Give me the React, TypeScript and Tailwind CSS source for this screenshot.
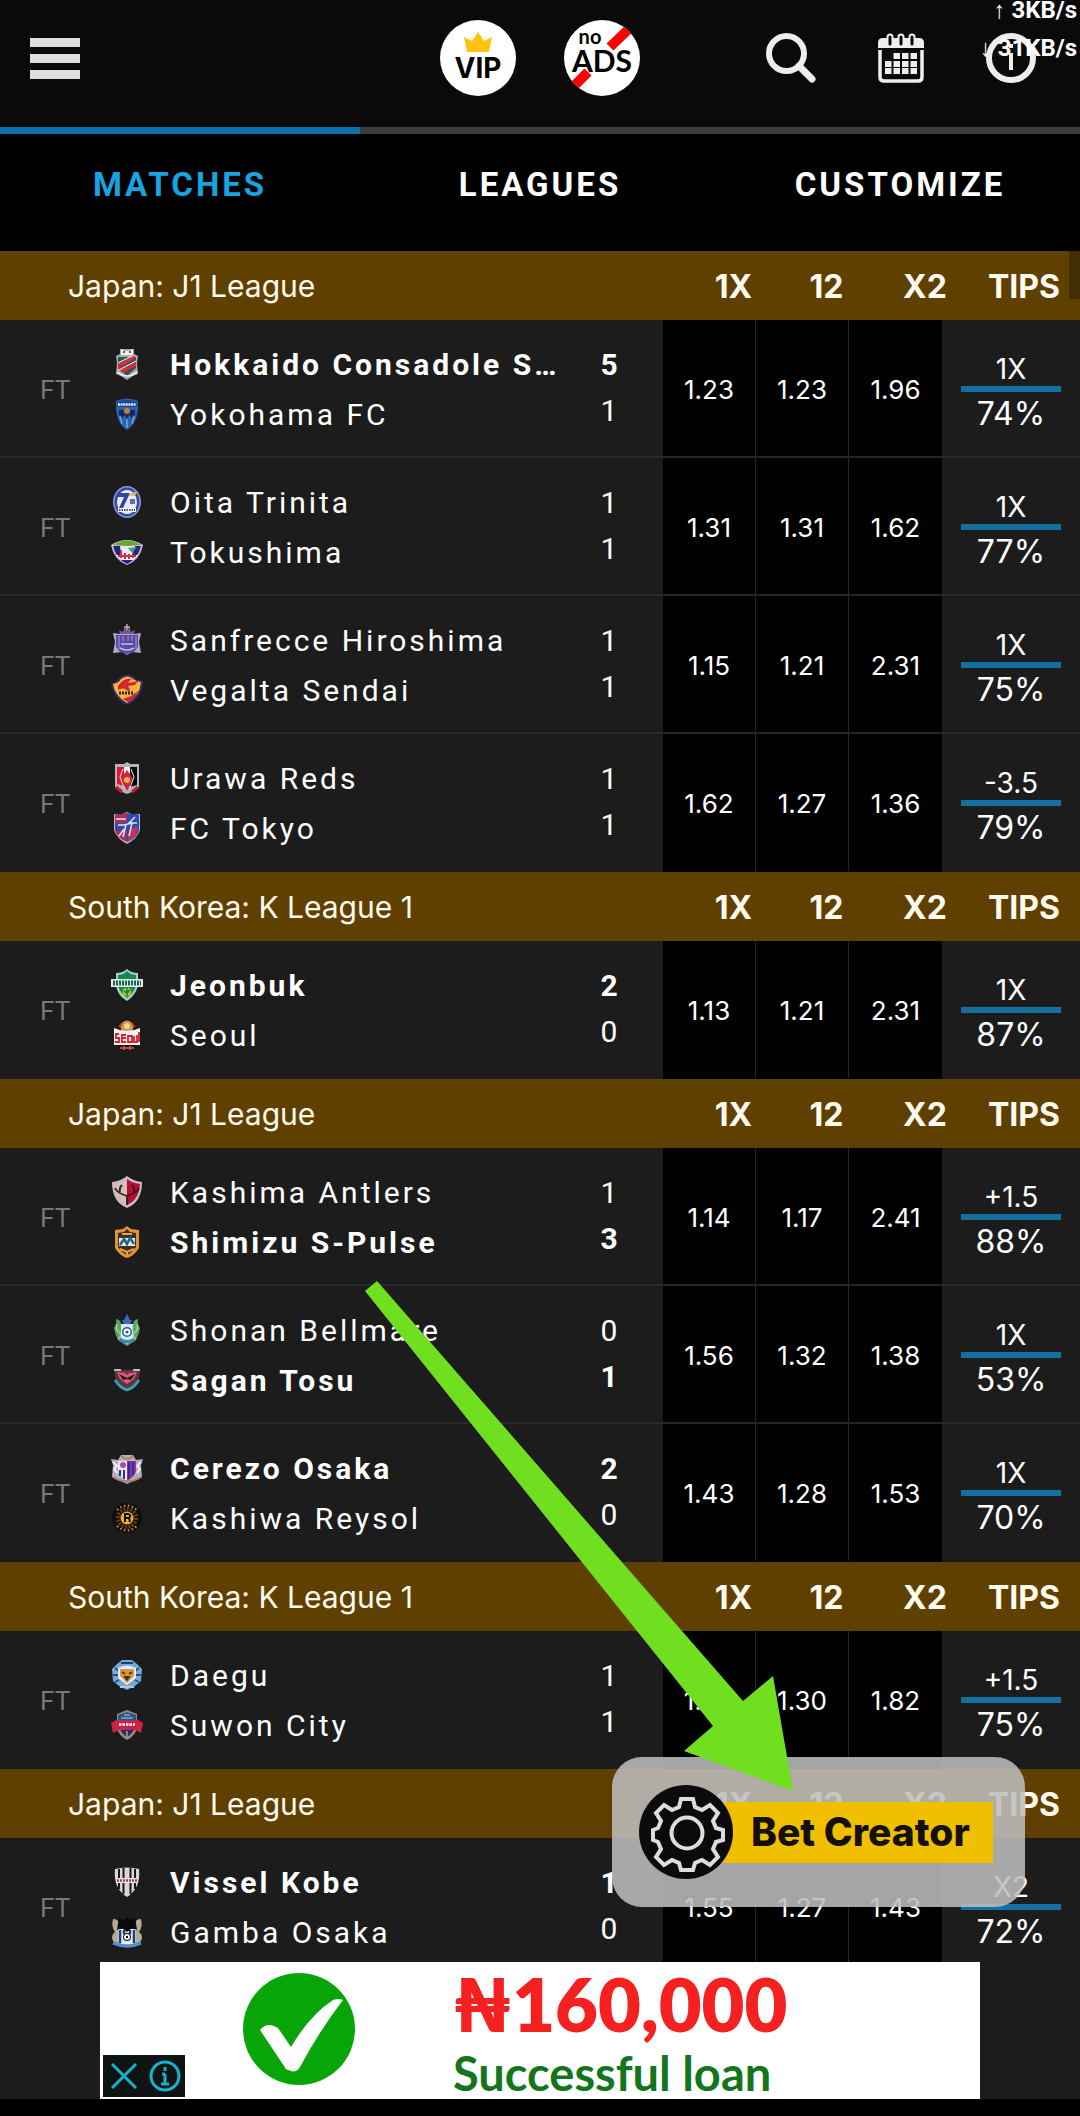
import type { ReactNode } from "react";

type Team = { name: string; crest: ReactNode; score: number; winner?: boolean };
type Match = { home: Team; away: Team; odds: [string, string, string]; tip: string; chance: string };
type League = { title: string; matches: Match[] };

const SHIELD = "M4 3 Q16 0 28 3 Q30 22 16 31 Q2 22 4 3Z";

function Crest({ children }: { children: ReactNode }) {
  return (
    <svg viewBox="0 0 32 32" className="size-8 shrink-0" aria-hidden="true">
      {children}
    </svg>
  );
}

const crests = {
  consadole: (
    <Crest>
      <path d="M9 1h14v5l4 2-1 7 1 11-5 2-6 4-6-4-5-2 1-11-1-7 4-2z" fill="#a9aaa9" />
      <path d="M10 1l4 2h4l4-2v6H10z" fill="#f1f1ef" />
      <path d="M12 4h2M18 4h2" stroke="#333" strokeWidth="1.5" />
      <path d="M7 9h18v11l-9 8-9-8z" fill="#28575f" />
      <path d="M7 16L22 8l3 2-18 11zM8 22l17-8v4L12 25z" fill="#d52b3a" />
      <path d="M7 15l14-7M8 22l17-9" stroke="#fff" strokeWidth="1" />
      <path d="M6 24l7 4M26 24l-7 4M10 27l6 1 6-1" stroke="#eee" strokeWidth="1.5" fill="none" />
    </Crest>
  ),
  yokohama: (
    <Crest>
      <path d="M5 3Q16-2 27 3Q28 25 16 32Q4 25 5 3Z" fill="#2c62ae" />
      <path d="M6 4Q16 0 26 4V9H6z" fill="#15479b" />
      <path d="M7 6.500h18" stroke="#dfe9f7" strokeWidth="2.500" strokeDasharray="2 .6" />
      <path d="M8 12h16v5l-3 3-3-3-2 4-2-4-3 3-3-3z" fill="#132b60" />
      <circle cx="16" cy="13" r="3" fill="#d1773b" />
      <path d="M9 18l2 8M23 18l-2 8M16 21v9" stroke="#6ea6e0" strokeWidth="1.500" />
    </Crest>
  ),
  oita: (
    <Crest>
      <ellipse cx="16" cy="16" rx="14" ry="16" fill="#8c9bd2" />
      <ellipse cx="16" cy="16" rx="12.500" ry="14.500" fill="#3949a4" />
      <ellipse cx="16" cy="16" rx="10" ry="12" fill="#e9edfa" />
      <path d="M7 7h12l-7 15H8l5-11H6z" fill="#3145a7" />
      <path d="M18 10q4-5 8-4l-2 4q-3-1-6 0z" fill="#d9b556" />
      <path d="M19 13h5v5h-5z" fill="#5a6cbd" />
      <path d="M7 24h18" stroke="#fff" strokeWidth="4" />
      <path d="M8 24h16" stroke="#3949a4" strokeWidth="2" strokeDasharray="1.500 1" />
    </Crest>
  ),
  tokushima: (
    <Crest>
      <path d="M0 9Q16-1 32 9Q29 24 16 29Q3 24 0 9Z" fill="#ccc8dc" />
      <path d="M2 9Q16 0 30 9l-14 1z" fill="#6aa52f" />
      <path d="M2 10h28Q27 23 16 28Q5 23 2 10Z" fill="#2b2383" />
      <path d="M9 10h15l-3 9H10z" fill="#e9edf0" />
      <path d="M17 12l9-1-5 6z" fill="#41a667" />
      <path d="M5 19h22l-5 5H10z" fill="#fff" />
      <path d="M10 14v8M7 20h18M14 17v6M18 18v5M22 19v3" stroke="#de2645" strokeWidth="2" />
    </Crest>
  ),
  hiroshima: (
    <Crest>
      <path d="M2 9l7 1 7-3 7 3 7-1-2 9 2 11-9-1-5 3-5-3-9 1 2-11z" fill="#b7a7ca" />
      <path d="M5 11h22v12l-4 5-7 2-7-2-4-5z" fill="#5a4aa1" />
      <path d="M8 12v13M12 12v5M17 12v5M21 12v5M25 12v13" stroke="#a59bd1" strokeWidth="1" />
      <path d="M10 20h12M9 24q7 4 14 0" stroke="#c6bee0" strokeWidth="1.500" fill="none" />
      <path d="M8 6l4 2 2-6 2 5 2-5 2 6 4-2-1 4H9z" fill="#735c91" />
      <path d="M16 0v6M13 3h6" stroke="#c7a9a2" strokeWidth="1.500" />
    </Crest>
  ),
  vegalta: (
    <Crest>
      <path d="M0 9q5 0 8-5 10-7 16 0 3 3 8 2Q32 24 16 31 2 25 0 9z" fill="#35296c" />
      <path d="M2 10q6-1 8-5 7-5 12 0 4 3 8 3Q29 22 16 29 4 22 2 10z" fill="#f3b63a" />
      <path d="M7 12q6-9 14-7-3 2-4 4l10-2-3 4-7 1q3 4 1 6-5-6-11-2z" fill="#d22533" />
      <path d="M12 25l8-3 7-5-4 8-6 3z" fill="#d22533" />
      <path d="M8 19h14" stroke="#2d2543" strokeWidth="3" strokeDasharray="2 1" />
    </Crest>
  ),
  urawa: (
    <Crest>
      <path d="M4 2h9l3-2 3 2h9v23l-7 5-5 2-5-2-7-5z" fill="#b6b4b5" />
      <path d="M6 5h7v19l-7-2z" fill="#df1538" />
      <path d="M19 5h7v18l-7 2z" fill="#080808" />
      <path d="M13 5h6v6h-6z" fill="#f3f3f3" />
      <path d="M16 8l6 9-6 12-6-12z" fill="#d92041" />
      <circle cx="16" cy="18" r="3" fill="#efb34b" />
      <path d="M5 25l6 5M27 25l-6 5" stroke="#c11b3b" strokeWidth="3" />
      <path d="M12 7l-3 8 4 11M20 7l3 8-4 11" stroke="#ece9ea" strokeWidth="1" fill="none" />
    </Crest>
  ),
  tokyo: (
    <Crest>
      <path d="M3 2l7 1 6-3 6 3 7-1v16q-3 9-13 14Q6 27 3 18z" fill="#bcb5cc" />
      <path d="M4 3l12-2v29Q6 26 4 18z" fill="#a93159" />
      <path d="M16 1l12 2v15q-2 8-12 12z" fill="#2a4bac" />
      <path d="M4 11h12v8H5z" fill="#344aa5" />
      <path d="M18 18l9-4-2 10-8 5z" fill="#c93255" />
      <path d="M5 7h10M7 13h8l-3 12M13 13l8-2-3 13M24 5l-6 6h8M8 24l5-7" stroke="#e4e2ed" strokeWidth="1.500" fill="none" />
    </Crest>
  ),
  jeonbuk: (
    <Crest>
      <path d="M5 4q7 0 11-4 4 4 11 4v13q-3 10-11 15Q7 27 5 17z" fill="#a8cfb8" />
      <path d="M7 6q6 0 9-4 3 4 9 4v11q-3 8-9 12-6-4-9-12z" fill="#128754" />
      <path d="M0 10h32v8H0z" fill="#e3eee7" />
      <path d="M2 14h28" stroke="#15694a" strokeWidth="5" strokeDasharray="2 1" />
      <circle cx="16" cy="23" r="4.500" fill="#9cc43b" />
      <path d="M16 18v9M13 22l3 2 3-3" stroke="#2c743a" strokeWidth="1.500" fill="none" />
    </Crest>
  ),
  seoul: (
    <Crest>
      <circle cx="16" cy="9" r="9" fill="#141414" />
      <circle cx="16" cy="8" r="6.500" fill="#c49951" />
      <circle cx="16" cy="7" r="3" fill="#efd58e" />
      <path d="M8 8l3-4M24 8l-3-4" stroke="#c33127" strokeWidth="2" />
      <path d="M5 24h22l-4 7H9z" fill="#181111" />
      <path d="M9 29h14M13 31v-4M19 31v-4" stroke="#c64538" strokeWidth="2" />
      <path d="M3 9q13 6 26 0v17H3z" fill="#f4f2f1" />
      <path d="M8 15H5v4h3v4H4M15 16h-4v7h4M11 19h4M17 17h4v6h-4zM23 17v6h3v-7M28 13v10" stroke="#d12130" strokeWidth="1.800" fill="none" />
    </Crest>
  ),
  kashima: (
    <Crest>
      <path d="M1 6Q10 5 16 0 22 5 31 6 31 26 16 32 1 26 1 6z" fill="#c9bdc0" />
      <path d="M3 8q8-1 13-5v26Q4 24 3 8z" fill="#d6bdb9" />
      <path d="M16 3q5 4 13 5-1 16-13 21z" fill="#b80f31" />
      <path d="M16 29V20Q6 17 4 12M16 20Q26 17 28 12M9 16Q8 12 11 9M23 16Q24 12 21 9" stroke="#2a1b21" strokeWidth="1.800" fill="none" />
    </Crest>
  ),
  shimizu: (
    <Crest>
      <path d="M4 4l8-1 4-3 4 3 8 1v18q-5 8-12 10Q9 30 4 22z" fill="#e69234" />
      <path d="M7 7l6-1 3-3 3 3 6 1v14q-4 6-9 8-5-2-9-8z" fill="#3b3024" />
      <path d="M8 12h16v8H8z" fill="#e9e6dc" />
      <path d="M9 19l4-6 3 5 3-6 4 6" stroke="#21618d" strokeWidth="2.500" fill="none" />
      <path d="M11 8h10M9 23l7 3 7-3M16 25v4" stroke="#efa13e" strokeWidth="2" fill="none" />
    </Crest>
  ),
  shonan: (
    <Crest>
      <path d="M5 5q5 1 5 5h12q0-4 5-5-1 6 2 9-1 6-4 12l-9 6-9-6Q4 20 3 14q3-4 2-9z" fill="#5ba666" />
      <path d="M16 0l3 6 2 0-2 5h-6l-2-5h2z" fill="#396eb5" />
      <path d="M10 10h12v14l-6 6-6-6z" fill="#d7e9ef" />
      <circle cx="16" cy="18" r="5" fill="#2e5799" />
      <circle cx="16" cy="18" r="3.500" fill="#fff" />
      <circle cx="16" cy="18" r="1.500" fill="#2e5799" />
      <path d="M6 10q-2 5 2 8t-1 7M26 10q2 5-2 8t1 7" stroke="#a3d39f" strokeWidth="1.500" fill="none" />
      <path d="M9 26q7 3 14 0" stroke="#3c82bd" strokeWidth="3" fill="none" />
    </Crest>
  ),
  sagan: (
    <Crest>
      <path d="M3 6h26l-2 12-11 9L5 18z" fill="#60333f" />
      <path d="M6 8l8 1 2 2 2-2 8-1-3 7-7 5-7-5z" fill="#dc5972" />
      <path d="M8 10l8 4 8-4-4 6-4-1-4 1z" fill="#1c171d" />
      <path d="M3 6h7M22 6h7" stroke="#b3c2cd" strokeWidth="2" />
      <path d="M4 16q5 8 12 10 7-2 12-10" stroke="#38a1bd" strokeWidth="2.500" fill="none" />
    </Crest>
  ),
  cerezo: (
    <Crest>
      <path d="M0 7l7 1 3-5h12l3 5 7-1-2 6 1 12-7 3-8 4-8-4-7-3 1-12z" fill="#b1b1c5" />
      <path d="M7 9h9v20q-9-5-9-11z" fill="#e9e9f6" />
      <path d="M16 9h9v9q0 6-9 11z" fill="#9e2c98" />
      <path d="M9 18v6M13 18v9M18 10v17M22 10v13" stroke="#28359a" strokeWidth="2" />
      <circle cx="12" cy="13" r="3" fill="#b24b96" />
      <path d="M10 4q6 6 12 0M2 25q14 9 28 0" stroke="#a6875a" strokeWidth="2" fill="none" />
      <path d="M2 10l4 4-3 3 3 4M30 10l-4 4 3 3-3 4" stroke="#fff" strokeWidth="1.500" fill="none" />
    </Crest>
  ),
  kashiwa: (
    <Crest>
      <circle cx="16" cy="16" r="15" fill="#100f0e" />
      <circle cx="16" cy="16" r="9" fill="none" stroke="#6b3c14" strokeWidth="4" strokeDasharray="2 1.500" />
      <path d="M6 8Q16-1 26 8M6 24Q16 33 26 24" fill="none" stroke="#c79b3c" strokeWidth="2" strokeDasharray="1.500 2.500" />
      <circle cx="16" cy="16" r="6.500" fill="#eeb02c" />
      <path d="M13 12h4q4 1 1 4h-4M14 12v8M18 16l1 4" stroke="#151008" strokeWidth="2" fill="none" />
    </Crest>
  ),
  daegu: (
    <Crest>
      <path d="M6 5l5-4h10l5 4 5 5-1 12-6 5-8 4-8-4-6-5L1 10z" fill="#76a9d3" />
      <path d="M4 9l4 3M28 9l-4 3M2 16h5M30 16h-5M4 23l4-2M28 23l-4-2" stroke="#214e83" strokeWidth="1.800" />
      <path d="M10 4h12" stroke="#193f6e" strokeWidth="2" />
      <path d="M7 9q9-5 18 0v10l-9 7-9-7z" fill="#e7eaf0" />
      <path d="M9 10h14v7l-7 7-7-7z" fill="#d9983d" />
      <path d="M11 13l3 2M21 13l-3 2M14 18h4l-2 3z" stroke="#483017" strokeWidth="1.800" fill="#483017" />
      <path d="M9 28h14" stroke="#a9cce6" strokeWidth="2" />
    </Crest>
  ),
  suwon: (
    <Crest>
      <path d="M6 5l10-4 10 4v14q-2 8-10 12Q8 27 6 19z" fill="#a08b72" />
      <path d="M7 6l9-3 9 3v8H7z" fill="#24578e" />
      <path d="M8 17h16q-1 7-8 11-7-4-8-11z" fill="#35286a" />
      <path d="M0 14l5-3h22l5 3-2 10-6-3H8l-6 3z" fill="#c92345" />
      <path d="M8 15.500h16" stroke="#fff" strokeWidth="2.500" strokeDasharray="2.500 1" />
      <path d="M13 6h6M10 9h12M16 22v6" stroke="#87a8c9" strokeWidth="1.500" />
    </Crest>
  ),
  vissel: (
    <Crest>
      <path d={SHIELD} fill="#d9d7d5" />
      <path d="M8 3v20M12.500 2v26M19.500 2v26M24 3v20" stroke="#191717" strokeWidth="2" />
      <path d="M5 12h22v5H5z" fill="#ece5e4" />
      <path d="M6 14.500h20" stroke="#934451" strokeWidth="2.500" strokeDasharray="2 1" />
    </Crest>
  ),
  gamba: (
    <Crest>
      <path d="M2 3q5 0 6 4 1 4-1 7 4 6 2 14-7 0-8-6 0-4 3-6-4-5-2-13z" fill="#b4ab91" />
      <path d="M30 3q-5 0-6 4-1 4 1 7-4 6-2 14 7 0 8-6 0-4-3-6 4-5 2-13z" fill="#b4ab91" />
      <path d="M7 13h18v13q-4 3-9 4-5-1-9-4z" fill="#e8edf3" />
      <path d="M9 14v13M13 14v4M19 14v4M23 14v13" stroke="#1d3f78" strokeWidth="2.500" />
      <path d="M8 1l4 3 4-3 4 3 4-3 2 13-5-2-5 4-5-4-5 2z" fill="#090a0c" />
      <circle cx="16" cy="21" r="4" fill="#0c1220" />
      <circle cx="16" cy="21" r="3" fill="#f2f2f2" />
      <path d="M15 20h2v2h-2z" fill="#111" />
      <path d="M2 27q14 6 28 0" stroke="#4d92cc" strokeWidth="3.500" fill="none" />
    </Crest>
  ),
};

const leagues: League[] = [
  {
    title: "Japan: J1 League",
    matches: [
      {
        home: { name: "Hokkaido Consadole Sapporo", crest: crests.consadole, score: 5, winner: true },
        away: { name: "Yokohama FC", crest: crests.yokohama, score: 1 },
        odds: ["1.23", "1.23", "1.96"], tip: "1X", chance: "74%",
      },
      {
        home: { name: "Oita Trinita", crest: crests.oita, score: 1 },
        away: { name: "Tokushima", crest: crests.tokushima, score: 1 },
        odds: ["1.31", "1.31", "1.62"], tip: "1X", chance: "77%",
      },
      {
        home: { name: "Sanfrecce Hiroshima", crest: crests.hiroshima, score: 1 },
        away: { name: "Vegalta Sendai", crest: crests.vegalta, score: 1 },
        odds: ["1.15", "1.21", "2.31"], tip: "1X", chance: "75%",
      },
      {
        home: { name: "Urawa Reds", crest: crests.urawa, score: 1 },
        away: { name: "FC Tokyo", crest: crests.tokyo, score: 1 },
        odds: ["1.62", "1.27", "1.36"], tip: "-3.5", chance: "79%",
      },
    ],
  },
  {
    title: "South Korea: K League 1",
    matches: [
      {
        home: { name: "Jeonbuk", crest: crests.jeonbuk, score: 2, winner: true },
        away: { name: "Seoul", crest: crests.seoul, score: 0 },
        odds: ["1.13", "1.21", "2.31"], tip: "1X", chance: "87%",
      },
    ],
  },
  {
    title: "Japan: J1 League",
    matches: [
      {
        home: { name: "Kashima Antlers", crest: crests.kashima, score: 1 },
        away: { name: "Shimizu S-Pulse", crest: crests.shimizu, score: 3, winner: true },
        odds: ["1.14", "1.17", "2.41"], tip: "+1.5", chance: "88%",
      },
      {
        home: { name: "Shonan Bellmare", crest: crests.shonan, score: 0 },
        away: { name: "Sagan Tosu", crest: crests.sagan, score: 1, winner: true },
        odds: ["1.56", "1.32", "1.38"], tip: "1X", chance: "53%",
      },
      {
        home: { name: "Cerezo Osaka", crest: crests.cerezo, score: 2, winner: true },
        away: { name: "Kashiwa Reysol", crest: crests.kashiwa, score: 0 },
        odds: ["1.43", "1.28", "1.53"], tip: "1X", chance: "70%",
      },
    ],
  },
  {
    title: "South Korea: K League 1",
    matches: [
      {
        home: { name: "Daegu", crest: crests.daegu, score: 1 },
        away: { name: "Suwon City", crest: crests.suwon, score: 1 },
        odds: ["1.54", "1.30", "1.82"], tip: "+1.5", chance: "75%",
      },
    ],
  },
  {
    title: "Japan: J1 League",
    matches: [
      {
        home: { name: "Vissel Kobe", crest: crests.vissel, score: 1, winner: true },
        away: { name: "Gamba Osaka", crest: crests.gamba, score: 0 },
        odds: ["1.55", "1.27", "1.43"], tip: "X2", chance: "72%",
      },
    ],
  },
];

function TopBar() {
  return (
    <header className="relative flex h-[127px] shrink-0 items-start bg-[#0a0a0a] pt-5 pr-11 pl-[30px]">
      <div className="flex h-[76px] flex-1 items-center">
        <button aria-label="Menu" className="flex w-[50px] flex-col gap-[7px]">
          <span className="h-[9px] bg-[#dedede]" />
          <span className="h-[9px] bg-[#dedede]" />
          <span className="h-[9px] bg-[#dedede]" />
        </button>
      </div>
      <div className="ml-3.5 flex gap-12">
        <button className="flex size-[76px] flex-col items-center rounded-full bg-white pt-3 font-[Inter,sans-serif] text-black">
          <svg viewBox="0 0 28 20" className="h-5 w-7" aria-hidden="true">
            <path d="M0 5l8 4 6-9 6 9 8-4-3 15H3z" fill="#ffc20e" />
          </svg>
          <span className="text-[28px] leading-8 font-bold">VIP</span>
        </button>
        <button className="relative flex size-[76px] flex-col items-center overflow-hidden rounded-full bg-white text-black">
          <svg viewBox="0 0 76 76" className="absolute inset-0" aria-hidden="true">
            <path d="M4 72L24 52M46 27L70 4" stroke="#fe0000" strokeWidth="10" />
          </svg>
          <span className="relative mt-1 mr-6 font-[Lato,sans-serif] text-xl leading-6 font-bold">no</span>
          <span className="relative font-[Lato,sans-serif] text-[30px] leading-6 font-bold">ADS</span>
        </button>
      </div>
      <div className="flex h-[76px] flex-1 items-center justify-end gap-[62px]">
        <button aria-label="Search">
          <svg viewBox="0 0 50 50" className="size-[50px]" fill="none" stroke="#eee" aria-hidden="true">
            <circle cx="20.500" cy="20.500" r="17.500" strokeWidth="6" />
            <path d="M33 33L46 46" strokeWidth="7" strokeLinecap="round" />
          </svg>
        </button>
        <button aria-label="Calendar">
          <svg viewBox="0 0 46 50" className="h-[50px] w-[46px]" aria-hidden="true">
            <path d="M5 5h36q5 0 5 5v5H0v-5q0-5 5-5z" fill="#eee" />
            <path d="M2 17v27q0 4 4 4h34q4 0 4-4V17" fill="none" stroke="#eee" strokeWidth="3.500" />
            <path d="M12 4v6M23 4v6M34 4v6" stroke="#eee" strokeWidth="7" strokeLinecap="round" />
            <path d="M12 4v7M23 4v7M34 4v7" stroke="#0a0a0a" strokeWidth="3" strokeLinecap="round" />
            <path d="M15.500 23h24M15.500 31h24M7 31h6.500M7 38h33" stroke="#eee" strokeWidth="6" strokeDasharray="6.500 2" />
          </svg>
        </button>
        <button aria-label="Information">
          <svg viewBox="0 0 50 50" className="size-[50px]" fill="none" stroke="#eee" aria-hidden="true">
            <circle cx="25" cy="25" r="22" strokeWidth="6" />
            <path d="M25 20v17M25 11v4" strokeWidth="4" />
          </svg>
        </button>
      </div>
      <div className="absolute top-0 right-[3px] text-right font-[Roboto,sans-serif] text-2xl leading-5 font-bold text-white">
        <p>↑ 3KB/s</p>
        <p className="mt-[18px]">↓ 31KB/s</p>
      </div>
    </header>
  );
}

function Tabs() {
  return (
    <nav className="grid h-[124px] shrink-0 grid-cols-3 bg-black font-[Roboto,sans-serif] text-[33px] font-bold tracking-[3px] text-white">
      <a href="#matches" className="border-t-[7px] border-[#0d70a8] pt-[26px] text-center text-[#18a4e0]">MATCHES</a>
      <a href="#leagues" className="border-t-[7px] border-[#3d3d3d] pt-[26px] text-center">LEAGUES</a>
      <a href="#customize" className="border-t-[7px] border-[#3d3d3d] pt-[26px] text-center">CUSTOMIZE</a>
    </nav>
  );
}

function TeamLine({ team }: { team: Team }) {
  return (
    <div className="flex h-[50px] items-center gap-[27px]">
      {team.crest}
      <span className={team.winner ? "truncate font-bold" : "truncate"}>{team.name}</span>
    </div>
  );
}

function MatchRow({ match, last }: { match: Match; last: boolean }) {
  const line = last ? "border-transparent" : "border-[#2a2a2a]";
  return (
    <tr className="h-[138px]">
      <td className={`border-b-2 p-0 pt-1 pl-10 font-[Roboto,sans-serif] text-[26px] text-[#777] ${line}`}>FT</td>
      <td className={`border-b-2 p-0 pt-0.5 pr-2 font-[Roboto,sans-serif] text-[30px] tracking-[3px] ${line}`}>
        <TeamLine team={match.home} />
        <TeamLine team={match.away} />
      </td>
      <td className={`border-b-2 p-0 pr-2.5 text-center font-[Roboto,sans-serif] text-[30px] leading-[46px] ${line}`}>
        <p className={match.home.winner ? "font-bold" : ""}>{match.home.score}</p>
        <p className={match.away.winner ? "font-bold" : ""}>{match.away.score}</p>
      </td>
      {match.odds.map((odd, i) => (
        <td
          key={i}
          className={`border-b-2 bg-black p-0 pt-0.5 text-center text-[26px] ${i < 2 ? "border-r border-r-[#262626]" : ""} ${last ? "border-b-black" : "border-b-[#262626]"}`}
        >
          {odd}
        </td>
      ))}
      <td className={`border-b-2 p-0 pt-2 ${line}`}>
        <div className="mx-auto flex w-[100px] flex-col text-center">
          <span className="border-b-[6px] border-[#14709f] pt-1 text-[28px] leading-[34px]">{match.tip}</span>
          <span className="text-[32px] leading-[44px]">{match.chance}</span>
        </div>
      </td>
    </tr>
  );
}

function MatchTable() {
  return (
    <table className="w-full table-fixed border-separate border-spacing-0 bg-[#1c1c1c] font-[Inter,sans-serif] text-white">
      <colgroup>
        <col className="w-[111px]" />
        <col />
        <col className="w-[98px]" />
        <col className="w-[93px]" />
        <col className="w-[93px]" />
        <col className="w-[93px]" />
        <col className="w-[138px]" />
      </colgroup>
      {leagues.map((league, i) => (
        <tbody key={i}>
          <tr className="h-[69px] bg-[#5f4000] text-[32px] text-[#fffbee]">
            <th scope="colgroup" colSpan={3} className="p-0 pt-0.5 pl-[68px] text-left text-[30px] font-normal">{league.title}</th>
            <th scope="col" className="p-0 pt-0.5 pl-12">1X</th>
            <th scope="col" className="p-0 pt-0.5 pl-12">12</th>
            <th scope="col" className="p-0 pt-0.5 pl-[54px]">X2</th>
            <th scope="col" className="p-0 pt-0.5 pr-5 text-right">TIPS</th>
          </tr>
          {league.matches.map((match, j) => (
            <MatchRow key={j} match={match} last={j === league.matches.length - 1} />
          ))}
        </tbody>
      ))}
    </table>
  );
}

function BetCreator() {
  return (
    <button className="absolute right-[55px] bottom-[55px] flex h-[150px] w-[413px] items-center rounded-[30px] bg-[#bebebe]/87 pl-[27px] font-[Inter,sans-serif]">
      <svg viewBox="0 0 94 94" className="relative z-10 size-[94px]" fill="none" stroke="#ddd" strokeWidth="4" aria-hidden="true">
        <circle cx="47" cy="47" r="47" fill="#0b0b0b" stroke="none" />
        <circle cx="48" cy="48" r="15.500" />
        <path d="M42 14h12l2 8 7 3 8-5 8 8-5 8 3 7 7 2v10l-7 2-3 7 5 8-8 8-8-5-7 3-2 7H42l-2-7-7-3-8 5-8-8 5-8-3-7-5-2V45l5-2 3-7-5-8 8-8 8 5 7-3z" />
      </svg>
      <span className="-ml-4 flex h-[61px] w-[276px] items-center bg-[#f0c000] pl-[34px] text-[39px] font-extrabold whitespace-nowrap text-[#141005]">
        Bet Creator
      </span>
    </button>
  );
}

function GuideArrow() {
  return (
    <svg viewBox="0 0 428 510" className="pointer-events-none absolute right-[287px] bottom-[171px] h-[510px] w-[428px]" aria-hidden="true">
      <path d="M0 10L12 0L378 420L408 395L428 510L319 470L348 445Z" fill="#6fdf1f" />
    </svg>
  );
}

function AdBanner() {
  return (
    <footer className="shrink-0 bg-[#1c1c1c]">
      <div className="relative mx-auto flex h-[137px] w-[880px] max-w-full bg-white pt-[11px] pl-[143px]">
        <svg viewBox="0 0 112 112" className="size-[112px]" aria-hidden="true">
          <circle cx="56" cy="56" r="56" fill="#07a507" />
          <path d="M17 57q6-7 14-4l4 2 13 19Q67 42 90 27q6-2 10 0Q75 60 57 94q-4 7-12 3-3-1-4-4z" fill="#fff" />
        </svg>
        <div className="ml-[98px] font-[Lato,sans-serif] font-bold">
          <p className="text-[74px] leading-[62px] font-extrabold text-[#f52020]">₦160,000</p>
          <p className="text-[47px] leading-[76px] text-[#13761d]">Successful loan</p>
        </div>
        <div className="absolute bottom-0.5 left-[3px] flex h-[42px] w-[82px] items-center gap-3 bg-[#101414] pl-2">
          <button aria-label="Close ad">
            <svg viewBox="0 0 26 26" className="size-[26px]" fill="none" stroke="#19b0cc" strokeWidth="3" aria-hidden="true">
              <path d="M1 1l24 24M25 1L1 25" />
            </svg>
          </button>
          <button aria-label="About this ad">
            <svg viewBox="0 0 32 32" className="size-8" fill="none" stroke="#19b0cc" strokeWidth="3" aria-hidden="true">
              <circle cx="16" cy="16" r="14" />
              <path d="M16 14v10M16 7v4M13 14h3M12 24h8" />
            </svg>
          </button>
        </div>
      </div>
      <div className="h-[17px] bg-black" />
    </footer>
  );
}

export default function App() {
  return (
    <div className="flex h-screen flex-col overflow-hidden bg-[#1c1c1c]">
      <TopBar />
      <Tabs />
      <main className="relative min-h-0 flex-1 overflow-hidden">
        <MatchTable />
        <span className="absolute top-0 right-0 h-12 w-[11px] bg-[#432e06]" />
        <BetCreator />
        <GuideArrow />
      </main>
      <AdBanner />
    </div>
  );
}
